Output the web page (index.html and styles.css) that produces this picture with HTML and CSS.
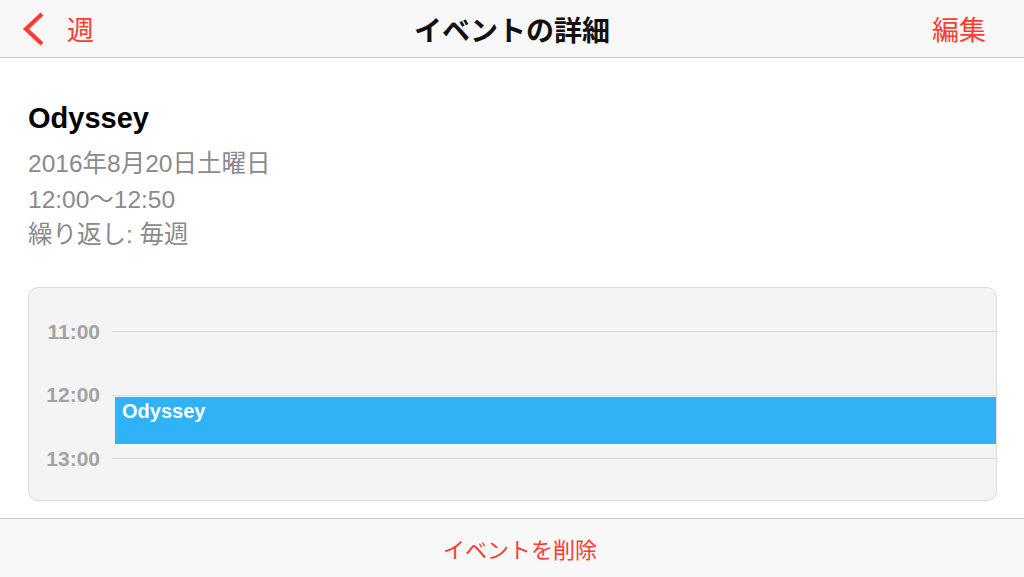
FILE: index.html
```html
<!DOCTYPE html>
<html lang="ja">
<head>
    <meta charset="UTF-8">
    <meta name="viewport" content="width=device-width, initial-scale=1.0">
    <title>イベントの詳細</title>
    <link rel="stylesheet" href="styles.css">
</head>
<body>

    <header class="nav-bar">
        <a class="nav-back" href="#">
            <svg class="chevron" width="26" height="34" viewBox="0 0 26 34">
                <polyline points="22,2 6,17 22,32" fill="none" stroke="#ff3b30" stroke-width="4.2" stroke-linecap="butt" stroke-linejoin="miter"/>
            </svg>
            <span>週</span>
        </a>
        <h1 class="nav-title">イベントの詳細</h1>
        <a class="nav-edit" href="#">編集</a>
    </header>

    <main class="content">
        <h2 class="event-title">Odyssey</h2>
        <div class="event-info">
            <p>2016年8月20日土曜日</p>
            <p>12:00〜12:50</p>
            <p>繰り返し: 毎週</p>
        </div>

        <div class="day-card">
            <div class="hour-row">
                <span class="hour-label">11:00</span>
                <span class="hour-line"></span>
            </div>
            <div class="hour-row">
                <span class="hour-label">12:00</span>
                <span class="hour-line"></span>
            </div>
            <div class="hour-row">
                <span class="hour-label">13:00</span>
                <span class="hour-line"></span>
            </div>
            <div class="event-block">Odyssey</div>
        </div>
    </main>

    <footer class="bottom-bar">
        <a class="delete-link" href="#">イベントを削除</a>
    </footer>

</body>
</html>
```

FILE: styles.css
```css
body {
    font-family: "Liberation Sans", "Noto Sans CJK JP", sans-serif;
    margin: 0;
    padding: 0;
    background-color: white;
    width: 1024px;
    height: 577px;
    display: flex;
    flex-direction: column;
    overflow: hidden;
}
a {
    text-decoration: none;
    color: #ff3b30;
}
.nav-bar {
    height: 57px;
    background-color: #f8f8f8;
    border-bottom: 1px solid #c8c8c8;
    display: flex;
    align-items: center;
    justify-content: space-between;
    padding: 0 38px 0 20px;
    position: relative;
    flex-shrink: 0;
}
.nav-back {
    display: flex;
    align-items: center;
    gap: 21px;
    font-size: 27px;
}
.chevron {
    display: block;
}
.nav-title {
    position: absolute;
    left: 0;
    right: 0;
    margin: 0;
    text-align: center;
    font-size: 28px;
    font-weight: bold;
    color: #111;
    pointer-events: none;
}
.nav-edit {
    font-size: 27px;
}
.content {
    flex: 1;
    padding: 0 27px 0 28px;
}
.event-title {
    margin: 42px 0 0;
    font-size: 29px;
    font-weight: bold;
    color: #000;
    line-height: 36px;
}
.event-info {
    margin-top: 10px;
}
.event-info p {
    margin: 0;
    font-size: 24.5px;
    line-height: 35.5px;
    color: #8a8a8e;
}
.day-card {
    position: relative;
    margin-top: 34px;
    background-color: #f4f4f4;
    border: 1px solid #dcdcdc;
    border-radius: 10px;
    padding: 34px 0 31px;
    display: flex;
    flex-direction: column;
    gap: 43.5px;
}
.hour-row {
    height: 20px;
    display: flex;
    align-items: center;
    gap: 12px;
}
.hour-label {
    width: 71px;
    text-align: right;
    font-size: 21px;
    font-weight: bold;
    color: #a3a3a3;
}
.hour-line {
    flex: 1;
    height: 1px;
    background-color: #d8d8d8;
}
.event-block {
    position: absolute;
    top: 109px;
    left: 86px;
    right: 0;
    height: 47px;
    background-color: #2fb2f6;
    color: white;
    font-size: 20px;
    font-weight: bold;
    padding: 3px 7px;
    box-sizing: border-box;
}
.bottom-bar {
    height: 58px;
    border-top: 1px solid #c8c8c8;
    background-color: #f8f8f8;
    display: flex;
    align-items: center;
    justify-content: center;
    padding-left: 16px;
    flex-shrink: 0;
}
.delete-link {
    font-size: 22px;
}
```
